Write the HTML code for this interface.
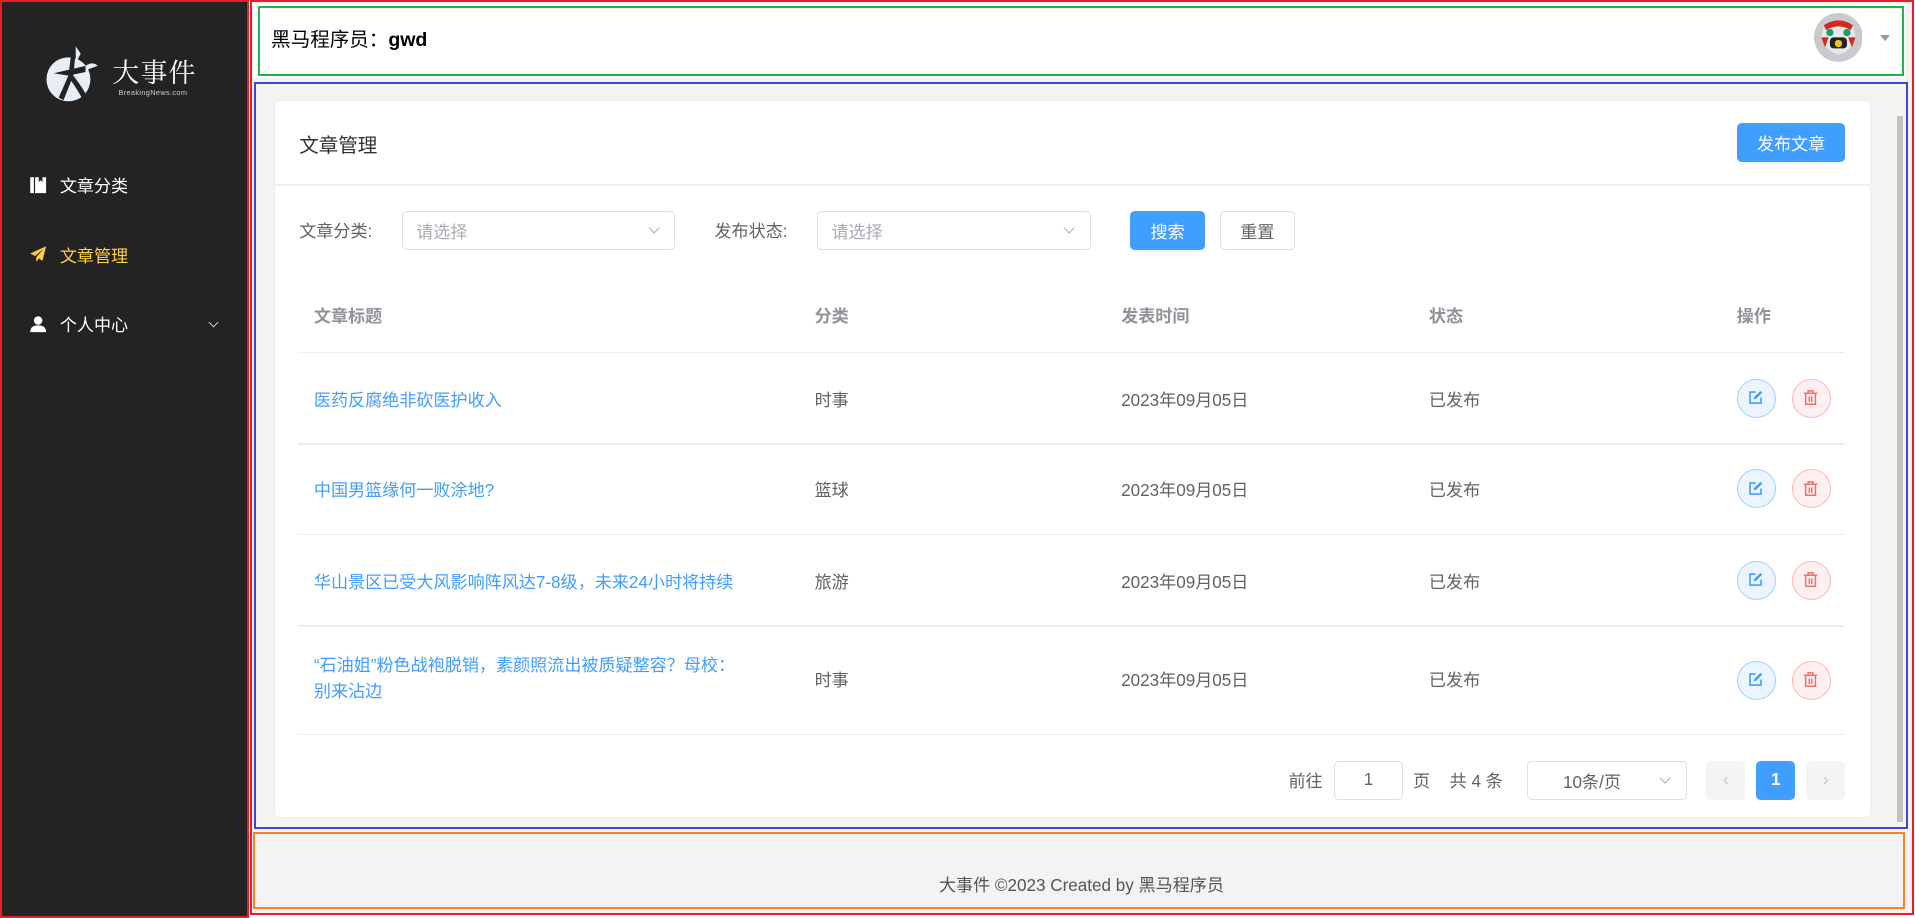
<!DOCTYPE html>
<html><head><meta charset="utf-8"><style>
html,body{margin:0;padding:0;background:#fff;overflow:hidden}
#w{width:1568px;height:752px;position:relative;zoom:1.2213;font-family:"Liberation Sans","Noto Sans CJK SC",sans-serif;color:#606266;font-size:14px}
.a{position:absolute}
.side{left:0;top:0;width:203px;height:752px;background:#232323}
.box{position:absolute;box-sizing:border-box;border-style:solid}
.mi{position:absolute;left:24px;font-size:14px;color:#fff;display:flex;align-items:center}
.mi span{margin-left:10px}
.sel{position:absolute;height:32px;box-sizing:border-box;border:1px solid #dcdfe6;border-radius:4px;background:#fff;color:#a8abb2;font-size:14px;display:flex;align-items:center;padding-left:11px}
.chev{position:absolute;right:13px;top:10px;width:6px;height:6px;border-right:1px solid #a8abb2;border-bottom:1px solid #a8abb2;transform:rotate(45deg)}
.btn{position:absolute;height:32px;box-sizing:border-box;border-radius:4px;font-size:14px;display:flex;align-items:center;justify-content:center}
.th{position:absolute;top:247px;font-weight:bold;color:#909399;font-size:14px}
.hl{position:absolute;left:244px;width:1267px;height:1px;background:#ebeef5}
.td{position:absolute;font-size:14px;color:#606266}
.lk{color:#409eff}
.ce{position:absolute;left:1422px;width:32px;height:32px;box-sizing:border-box;border-radius:50%;border:1px solid #a0cfff;background:#ecf5ff}
.cd{position:absolute;left:1467px;width:32px;height:32px;box-sizing:border-box;border-radius:50%;border:1px solid #fab6b6;background:#fef0f0}
.ce svg,.cd svg{position:absolute;left:8px;top:8px}
</style></head><body><div id="w">
<div class="a side"></div>
<div class="box" style="left:0;top:0;width:204px;height:752px;border-width:2px;border-color:#ed1c24"></div>
<svg class="a" style="left:36px;top:32px" width="50" height="56" viewBox="0 0 50 56">
<circle cx="20" cy="33" r="18" fill="#e8eef5"/>
<path d="M8 28 L34 22 L34 27 L20 30 Z" fill="#232323"/>
<path d="M22 14 L26 10 L24 30 L16 50 L12 48 L20 30 Z" fill="#232323"/>
<path d="M24 30 Q32 40 38 52 L34 54 Q28 42 22 34 Z" fill="#232323"/>
<path d="M26 6 L30 12 L26 20 Z" fill="#e8eef5"/>
<path d="M34 22 Q40 18 44 22 Q38 24 34 26Z" fill="#e8eef5"/>
</svg>
<div class="a" style="left:92px;top:42px;color:#fff;font-size:22px;font-family:'Noto Serif CJK SC',serif;letter-spacing:1px">大事件</div>
<div class="a" style="left:97px;top:72px;color:#ccc;font-size:6px;letter-spacing:0.3px">BreakingNews.com</div>
<div class="mi" style="top:141px"><svg width="15" height="15" viewBox="0 0 15 15"><rect x="1" y="1" width="3" height="13" fill="#fff"/><path d="M5 1 H8 V5 L9.5 3.5 L11 5 V1 H14 V14 H5Z" fill="#fff"/></svg><span>文章分类</span></div>
<div class="mi" style="top:198px;color:#ffd04b"><svg width="15" height="15" viewBox="0 0 15 15"><path d="M14 1 L1 7 L5 9 L12 3 L6 10 L6 14 L8 11 L11 13 Z" fill="#ffd04b"/></svg><span>文章管理</span></div>
<div class="mi" style="top:255px"><svg width="15" height="15" viewBox="0 0 15 15"><circle cx="7.5" cy="4.5" r="3.5" fill="#fff"/><path d="M1 14 Q1 8.5 7.5 8.5 Q14 8.5 14 14Z" fill="#fff"/></svg><span>个人中心</span></div>
<div class="a" style="left:172px;top:261px;width:5px;height:5px;border-right:1px solid #ccc;border-bottom:1px solid #ccc;transform:rotate(45deg)"></div>
<div class="a" style="left:205px;top:0;width:1361px;height:748px;background:#f3f3f3"></div>
<div class="a" style="left:207px;top:3px;width:1353px;height:61px;background:#fff"></div>
<div class="box" style="left:211px;top:5px;width:1348px;height:57px;border-width:2px;border-color:#22b14c"></div>
<div class="a" style="left:222px;top:19px;font-size:16px;color:#000">黑马程序员：<b>gwd</b></div>
<svg class="a" style="left:1485px;top:11px" width="40" height="40" viewBox="0 0 40 40">
<circle cx="20" cy="20" r="20" fill="#c9cacf"/>
<path d="M8 10 Q20 2 32 10 L34 20 Q30 32 20 34 Q10 32 6 20Z" fill="#e8e8e8"/>
<path d="M8 10 Q20 2 32 10 L30 14 Q20 8 10 14Z" fill="#d8261c"/>
<circle cx="13" cy="16" r="3" fill="#1a9f6a"/><circle cx="27" cy="16" r="3" fill="#1a9f6a"/>
<rect x="13" y="20" width="14" height="9" rx="3" fill="#222"/>
<circle cx="20" cy="25" r="3" fill="#f2c21a"/>
<path d="M6 20 L9 28 L12 20Z M28 20 L31 28 L34 20Z" fill="#d8261c"/>
</svg>
<div class="a" style="left:1539px;top:29px;width:0;height:0;border-left:4.5px solid transparent;border-right:4.5px solid transparent;border-top:5px solid #999"></div>
<div class="a" style="left:1553px;top:95px;width:5px;height:578px;background:#c1c1c1"></div>
<div class="a" style="left:224px;top:82px;width:1308px;height:588px;background:#fff;border:1px solid #ebeef5;border-radius:4px;box-sizing:border-box"></div>
<div class="a" style="left:224px;top:151px;width:1308px;height:1px;background:#ebeef5"></div>
<div class="a" style="left:245px;top:106px;font-size:16px;color:#303133">文章管理</div>
<div class="btn" style="left:1422px;top:101px;width:89px;background:#409eff;color:#fff">发布文章</div>
<div class="a" style="left:245px;top:178px">文章分类:</div>
<div class="sel" style="left:329px;top:173px;width:224px">请选择<div class="chev"></div></div>
<div class="a" style="left:585px;top:178px">发布状态:</div>
<div class="sel" style="left:669px;top:173px;width:224px">请选择<div class="chev"></div></div>
<div class="btn" style="left:925px;top:173px;width:62px;background:#409eff;color:#fff">搜索</div>
<div class="btn" style="left:999px;top:173px;width:61px;border:1px solid #dcdfe6;color:#606266">重置</div>
<div class="th" style="left:257px">文章标题</div><div class="th" style="left:667px">分类</div><div class="th" style="left:918px">发表时间</div><div class="th" style="left:1170px">状态</div><div class="th" style="left:1422px">操作</div>
<div class="hl" style="top:288px"></div><div class="hl" style="top:363px"></div><div class="hl" style="top:437px"></div><div class="hl" style="top:512px"></div><div class="hl" style="top:601px"></div>
<div class="td lk" style="left:257px;top:316px">医药反腐绝非砍医护收入</div><div class="td" style="left:667px;top:316px">时事</div><div class="td" style="left:918px;top:316px">2023年09月05日</div><div class="td" style="left:1170px;top:316px">已发布</div>
<div class="td lk" style="left:257px;top:390px">中国男篮缘何一败涂地?</div><div class="td" style="left:667px;top:390px">篮球</div><div class="td" style="left:918px;top:390px">2023年09月05日</div><div class="td" style="left:1170px;top:390px">已发布</div>
<div class="td lk" style="left:257px;top:465px">华山景区已受大风影响阵风达7-8级，未来24小时将持续</div><div class="td" style="left:667px;top:465px">旅游</div><div class="td" style="left:918px;top:465px">2023年09月05日</div><div class="td" style="left:1170px;top:465px">已发布</div>
<div class="td lk" style="left:257px;top:535px;line-height:21px">“石油姐”粉色战袍脱销，素颜照流出被质疑整容？母校：<br>别来沾边</div><div class="td" style="left:667px;top:545px">时事</div><div class="td" style="left:918px;top:545px">2023年09月05日</div><div class="td" style="left:1170px;top:545px">已发布</div>
<div class="ce" style="top:310px"><svg width="14" height="14" viewBox="0 0 14 14"><path d="M7 2.5H2.5V11.5H11.5V7" fill="none" stroke="#409eff" stroke-width="1.3"/><path d="M5.5 8.5 L6 6.5 L11 1.5 L12.5 3 L7.5 8 Z" fill="#409eff"/></svg></div>
<div class="cd" style="top:310px"><svg width="14" height="14" viewBox="0 0 14 14"><path d="M1.5 3.5H12.5M5 3.5V1.5H9V3.5M3 3.5V12.5H11V3.5M6 6V10.5M8 6V10.5" fill="none" stroke="#f56c6c" stroke-width="1.2"/></svg></div>
<div class="ce" style="top:384px"><svg width="14" height="14" viewBox="0 0 14 14"><path d="M7 2.5H2.5V11.5H11.5V7" fill="none" stroke="#409eff" stroke-width="1.3"/><path d="M5.5 8.5 L6 6.5 L11 1.5 L12.5 3 L7.5 8 Z" fill="#409eff"/></svg></div>
<div class="cd" style="top:384px"><svg width="14" height="14" viewBox="0 0 14 14"><path d="M1.5 3.5H12.5M5 3.5V1.5H9V3.5M3 3.5V12.5H11V3.5M6 6V10.5M8 6V10.5" fill="none" stroke="#f56c6c" stroke-width="1.2"/></svg></div>
<div class="ce" style="top:459px"><svg width="14" height="14" viewBox="0 0 14 14"><path d="M7 2.5H2.5V11.5H11.5V7" fill="none" stroke="#409eff" stroke-width="1.3"/><path d="M5.5 8.5 L6 6.5 L11 1.5 L12.5 3 L7.5 8 Z" fill="#409eff"/></svg></div>
<div class="cd" style="top:459px"><svg width="14" height="14" viewBox="0 0 14 14"><path d="M1.5 3.5H12.5M5 3.5V1.5H9V3.5M3 3.5V12.5H11V3.5M6 6V10.5M8 6V10.5" fill="none" stroke="#f56c6c" stroke-width="1.2"/></svg></div>
<div class="ce" style="top:541px"><svg width="14" height="14" viewBox="0 0 14 14"><path d="M7 2.5H2.5V11.5H11.5V7" fill="none" stroke="#409eff" stroke-width="1.3"/><path d="M5.5 8.5 L6 6.5 L11 1.5 L12.5 3 L7.5 8 Z" fill="#409eff"/></svg></div>
<div class="cd" style="top:541px"><svg width="14" height="14" viewBox="0 0 14 14"><path d="M1.5 3.5H12.5M5 3.5V1.5H9V3.5M3 3.5V12.5H11V3.5M6 6V10.5M8 6V10.5" fill="none" stroke="#f56c6c" stroke-width="1.2"/></svg></div>
<div class="a" style="left:1055px;top:628px">前往</div>
<div class="btn" style="left:1092px;top:623px;width:57px;border:1px solid #dcdfe6;color:#606266">1</div>
<div class="a" style="left:1157px;top:628px">页</div>
<div class="a" style="left:1187px;top:628px">共 4 条</div>
<div class="sel" style="left:1250px;top:623px;width:131px;color:#606266;padding-left:29px">10条/页<div class="chev"></div></div>
<div class="btn" style="left:1397px;top:623px;width:32px;background:#f4f4f5;color:#c0c4cc">‹</div>
<div class="btn" style="left:1438px;top:623px;width:32px;background:#409eff;color:#fff;font-weight:bold">1</div>
<div class="btn" style="left:1479px;top:623px;width:32px;background:#f4f4f5;color:#c0c4cc">›</div>
<div class="box" style="left:208px;top:67px;width:1354px;height:612px;border-width:2px;border-color:#3f48cc"></div>
<div class="box" style="left:207px;top:681px;width:1353px;height:63px;border-width:2px;border-color:#ff7f27"></div>
<div class="a" style="left:205px;width:1361px;top:713px;text-align:center;color:#555">大事件 ©2023 Created by 黑马程序员</div>
<div class="box" style="left:205px;top:0;width:1362px;height:749px;border-width:2px;border-color:#ed1c24"></div>
</div></body></html>
